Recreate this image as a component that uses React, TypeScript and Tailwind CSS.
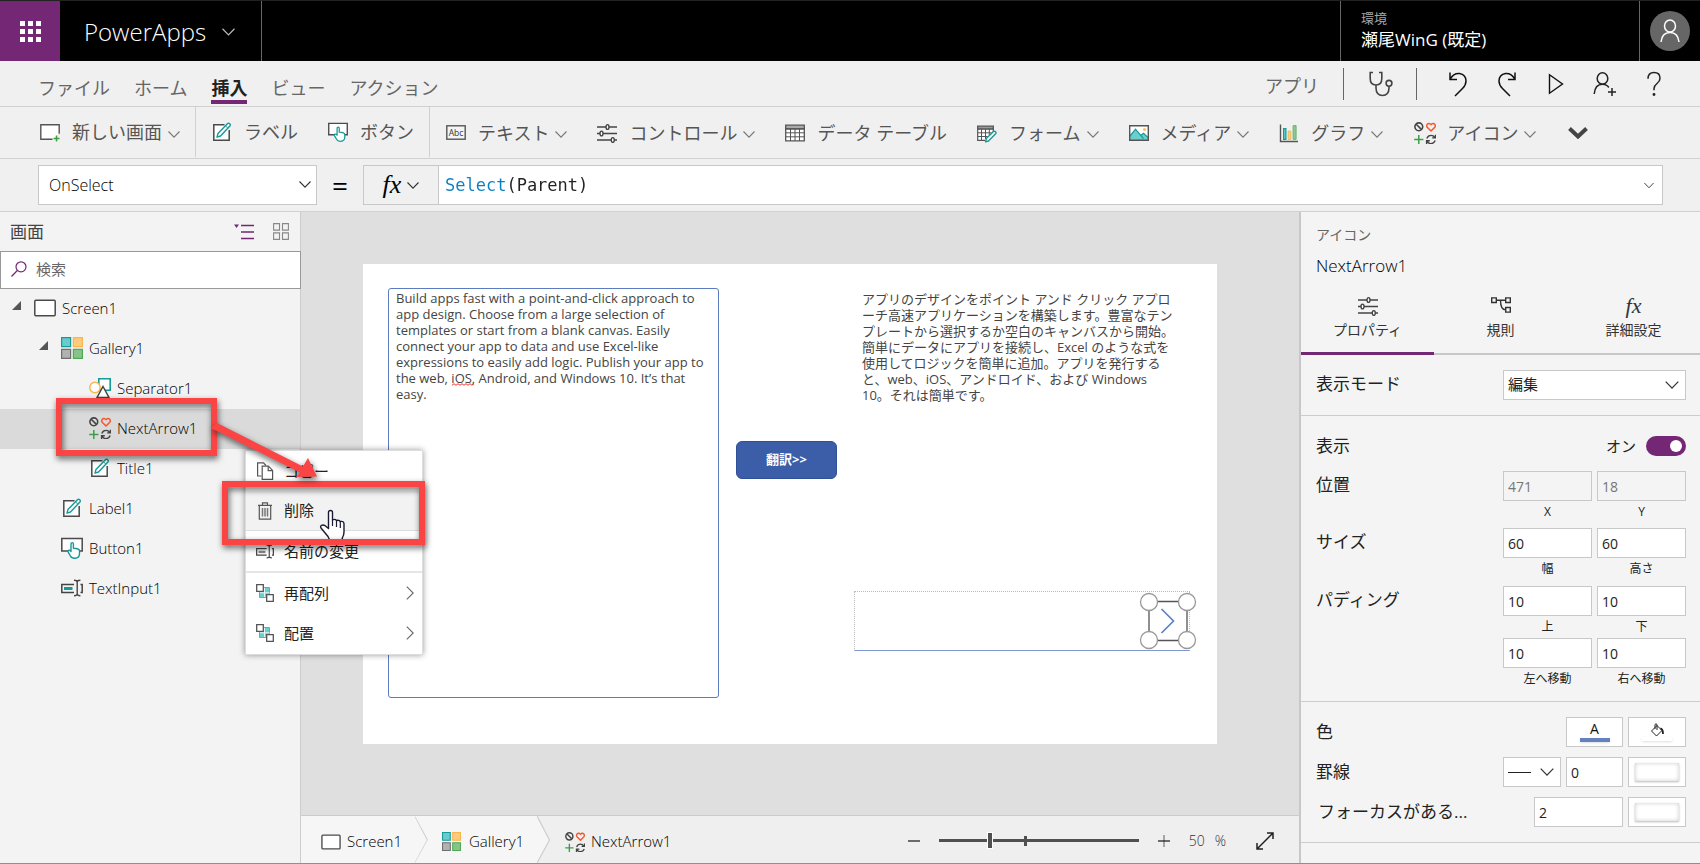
import React from "react";

type IconProps = { className?: string };

const Chevron = ({ className = "h-[7px] w-3 text-[#555]" }: IconProps) => (
  <svg className={className} viewBox="0 0 12 7" fill="none" stroke="currentColor" strokeWidth="1.1" aria-hidden="true">
    <path d="M.5 .5 6 6.2 11.5 .5" />
  </svg>
);

const ChevronRight = ({ className = "h-3.5 w-2 text-[#666]" }: IconProps) => (
  <svg className={className} viewBox="0 0 8 14" fill="none" stroke="currentColor" strokeWidth="1.1" aria-hidden="true">
    <path d="M.8 .6 7.2 7 .8 13.4" />
  </svg>
);

const NewScreenIcon = () => (
  <svg className="h-5 w-5 shrink-0" viewBox="0 0 20 20" fill="none" aria-hidden="true">
    <path d="M12.500 17.300H.8V2.700h18.400v9" fill="#fff" stroke="#555" strokeWidth="1.400" />
    <path d="M16.500 13.500v6M13.500 16.500h6" stroke="#3f9e45" strokeWidth="1.500" />
  </svg>
);

const ScreenIcon = ({ className = "h-[18px] w-[22px]" }: IconProps) => (
  <svg className={className} viewBox="0 0 22 18" aria-hidden="true">
    <rect x=".8" y="1.200" width="20.400" height="15.600" rx="1" fill="#fff" stroke="#4a4a4a" strokeWidth="1.500" />
  </svg>
);

const LabelIcon = ({ className = "h-5 w-5" }: IconProps) => (
  <svg className={`shrink-0 ${className}`} viewBox="0 0 20 20" fill="none" aria-hidden="true">
    <path d="M12.500 2.700H1.800v15.500h15.400V8" fill="#fff" stroke="#4a4a4a" strokeWidth="1.500" />
    <path d="M5 15.200l1-3.800L15.400 1.700q1.200-1 2.300 0t.2 2.300L8.500 14z" fill="#fff" stroke="#159a98" strokeWidth="1.400" strokeLinejoin="round" />
    <path d="M13.600 4 15.800 6" stroke="#159a98" />
  </svg>
);

const ButtonIcon = ({ className = "h-5 w-5" }: IconProps) => (
  <svg className={`shrink-0 ${className}`} viewBox="0 0 22 22" fill="none" aria-hidden="true">
    <path d="M7 14H.8V1.500h20.400V14H18" fill="#fff" stroke="#4a4a4a" strokeWidth="1.500" />
    <path
      d="M10 13.600V7q0-1.400 1.200-1.400T12.400 7v4.200q2.800.2 4.600.8 1.500.5 1.500 2v2.500q0 4.500-4.600 4.700-3.400.1-4.500-2.200L7.200 15.200q-.6-1.600.6-1.900 1-.2 2.200 1.200z"
      fill="#fff"
      stroke="#159a98"
      strokeWidth="1.400"
      strokeLinejoin="round"
    />
  </svg>
);

const TextIcon = () => (
  <svg className="h-5 w-5 shrink-0" viewBox="0 0 20 20" aria-hidden="true">
    <rect x=".8" y="2.800" width="18.400" height="13.400" fill="#f4f4f4" stroke="#555" strokeWidth="1.400" />
    <text x="10" y="12.600" textAnchor="middle" fontSize="8.500" fontFamily="Open Sans, sans-serif" fill="#333">
      Abc
    </text>
  </svg>
);

const SlidersIcon = ({ className = "h-5 w-5" }: IconProps) => (
  <svg className={`shrink-0 ${className}`} viewBox="0 0 20 20" fill="none" stroke="#444" strokeWidth="1.400" aria-hidden="true">
    <path d="M0 4h20M0 10.500h20M0 17h20" />
    <ellipse cx="10.500" cy="4" rx="1.500" ry="2.400" fill="#fff" />
    <ellipse cx="4.500" cy="10.500" rx="1.500" ry="2.400" fill="#fff" />
    <ellipse cx="15.800" cy="17" rx="1.500" ry="2.400" fill="#fff" />
  </svg>
);

const TableIcon = () => (
  <svg className="h-5 w-5 shrink-0" viewBox="0 0 20 20" fill="none" stroke="#555" aria-hidden="true">
    <path d="M.7 2.200h18.600v3.800H.7z" fill="#aaa" strokeWidth="1.300" />
    <path d="M.7 6h18.600v11.800H.7z" fill="#fff" strokeWidth="1.300" />
    <path d="M5.500 6v12M10 6v12M14.500 6v12M.7 9.800h18.600M.7 13.800h18.600" />
  </svg>
);

const FormIcon = () => (
  <svg className="h-5 w-5 shrink-0" viewBox="0 0 20 20" fill="none" stroke="#555" aria-hidden="true">
    <path d="M.7 3.200h15.600v3H.7z" fill="#999" strokeWidth="1.300" />
    <path d="M8 17.300H.7V6.200h15.600v3" fill="#fff" strokeWidth="1.200" />
    <path d="M4.500 6v11M8.500 6v10M12.300 6v6M.7 9.800h14M.7 13.500h10" />
    <path d="M8.500 18.800l.8-3.200 7.200-7q1-.8 2 .1t.1 2L11.500 18z" fill="#fff" stroke="#159a98" strokeWidth="1.400" strokeLinejoin="round" />
  </svg>
);

const MediaIcon = () => (
  <svg className="h-5 w-5 shrink-0" viewBox="0 0 20 20" fill="none" aria-hidden="true">
    <path d="M.7 2.700h18.600v14.600H.7z" fill="#fff" />
    <circle cx="15.500" cy="6.500" r="1.600" fill="#fbc26a" />
    <path d="M1 13.500 6.500 6.200l5.500 6 2.500-2L19 14.500v2.600H1z" fill="#6ccfce" />
    <path d="M1 13 6.500 6.200l8 9.500M12 12.200l2.500-2L19 14.500" stroke="#159a98" strokeWidth="1.200" />
    <path d="M.7 2.700h18.600v14.600H.7z" stroke="#555" strokeWidth="1.400" />
  </svg>
);

const ChartIcon = () => (
  <svg className="h-5 w-5 shrink-0" viewBox="0 0 20 20" fill="none" aria-hidden="true">
    <path d="M1.500 1.500v17H19" stroke="#555" strokeWidth="1.400" />
    <path d="M4.600 5.600h2.300v10.800H4.600z" fill="#6ccfce" stroke="#159a98" strokeWidth="1.200" />
    <path d="M9.200 8.100h2.600v8.300H9.200z" fill="#fbd08a" stroke="#f5b555" />
    <path d="M14.100 2.600h3v13.800h-3z" fill="#8bc78e" stroke="#6db771" />
  </svg>
);

const ShapesSetIcon = ({ className = "h-[22px] w-[22px]" }: IconProps) => (
  <svg className={`shrink-0 ${className}`} viewBox="0 0 22 22" fill="none" aria-hidden="true">
    <circle cx="4.800" cy="4.800" r="3.900" stroke="#444" strokeWidth="1.600" />
    <path d="M2.200 2.200 7.400 7.400" stroke="#444" strokeWidth="1.600" />
    <path d="M17 9 13.200 5.200q-1-1.400 0-2.900 1.800-1.900 3.800.3 2-2.200 3.800-.3 1 1.500 0 2.900z" stroke="#f1582d" strokeWidth="1.500" strokeLinejoin="round" />
    <path d="M4.800 13v9M.2 17.500h9.200" stroke="#3f9e45" strokeWidth="1.500" />
    <path d="M12.800 16.400q1.200-3 4.300-3 2.300 0 3.600 2M21.400 12.700v3.200h-3.200M21.200 18.600q-1.200 3-4.300 3-2.300 0-3.600-2M12.600 22v-3.200h3.200" stroke="#444" strokeWidth="1.400" />
  </svg>
);

const GalleryIcon = ({ className = "h-[22px] w-[22px]" }: IconProps) => (
  <svg className={className} viewBox="0 0 22 22" aria-hidden="true">
    <path d="M.6.600h9v9h-9z" fill="#67cccb" stroke="#159a98" strokeWidth="1.200" />
    <path d="M12.400.6h9v9h-9z" fill="#fdcb7b" stroke="#f9b64c" strokeWidth="1.200" />
    <path d="M.6 12.400h9v9h-9z" fill="#b1b1b1" stroke="#6e6e6e" strokeWidth="1.200" />
    <path d="M12.400 12.400h9v9h-9z" fill="#87c489" stroke="#4fa955" strokeWidth="1.200" />
  </svg>
);

const SeparatorIcon = () => (
  <svg className="h-[22px] w-[22px]" viewBox="0 0 22 22" aria-hidden="true">
    <path d="M9.800 1.800h11.400v11.400H9.800z" fill="#fff" stroke="#159a98" strokeWidth="1.600" />
    <circle cx="6" cy="10.500" r="5.200" fill="#fff" stroke="#f9b64c" strokeWidth="1.500" />
    <path d="M14 9.500 20 20.500H8z" fill="#fff" stroke="#444" strokeWidth="1.500" />
  </svg>
);

const TextInputIcon = ({ accent = "#159a98", className = "h-[18px] w-[22px]" }: IconProps & { accent?: string }) => (
  <svg className={className} viewBox="0 0 22 18" fill="none" aria-hidden="true">
    <path d="M13 13.500H.8v-8H13M19.500 5.500h1.700v8h-1.700" stroke="#444" strokeWidth="1.500" />
    <path d="M3 8h8.500v3H3z" fill={accent} />
    <path d="M13 1.200q3.200 0 3.200 1.700v12.200q0 1.700-3.200 1.700M19.400 1.200q-3.200 0-3.200 1.700v12.200q0 1.700 3.200 1.700" stroke="#444" strokeWidth="1.400" />
  </svg>
);

const FxIcon = ({ className }: IconProps) => (
  <span className={`font-['Liberation_Serif',serif] italic ${className}`} aria-hidden="true">
    fx
  </span>
);

const ArrangeIcon = () => (
  <svg className="h-[18px] w-[18px]" viewBox="0 0 18 18" fill="none" aria-hidden="true">
    <path d="M3.500 3.500h10v10h-10z" fill="#6ccfce" stroke="#4bb9b8" />
    <path d="M.7.700h6.600v6.600H.7zM10.700 10.700h6.600v6.600h-6.600z" fill="#fff" stroke="#555" strokeWidth="1.300" />
    <path d="M8.500 4v9M4 8.800h9.500" stroke="#fff" strokeWidth=".8" />
  </svg>
);

const CopyIcon = () => (
  <svg className="h-[18px] w-[18px]" viewBox="0 0 18 18" fill="#fff" stroke="#555" strokeWidth="1.200" aria-hidden="true">
    <path d="M5.500 14H1.600V.8h5.900L10 3.500" />
    <path d="M6.200 4.200h6.200l4.200 4.200v9H6.200z" />
    <path d="M12.200 4.400v4.200h4.200" fill="none" />
  </svg>
);

const TrashIcon = () => (
  <svg className="h-[18px] w-[18px]" viewBox="0 0 18 18" fill="none" stroke="#555" strokeWidth="1.200" aria-hidden="true">
    <path d="M2 3.300h14M6.500 3V.9h5V3M3.300 3.500v13.700h11.400V3.500" />
    <path d="M6.500 6v8.500M9 6v8.500M11.500 6v8.500" strokeWidth="1.500" stroke="#777" />
  </svg>
);

type RibbonItemProps = { icon: React.ReactNode; label: string; menu?: boolean };

const RibbonItem = ({ icon, label, menu }: RibbonItemProps) => (
  <button className="flex shrink-0 items-center whitespace-nowrap text-lg leading-6 text-[#555]">
    <span className="mr-3 flex w-5 justify-center">{icon}</span>
    {label}
    {menu && (
      <span className="ml-1.5 pt-1">
        <Chevron className="h-[7px] w-3 text-[#777]" />
      </span>
    )}
  </button>
);

const TopBar = () => (
  <header className="flex h-[61px] shrink-0 border-t border-[#222] bg-black text-white">
    <button aria-label="アプリ起動ツール" className="flex w-[60px] items-center justify-center bg-[#742774]">
      <span className="grid grid-cols-3 gap-[3px]">
        {Array.from({ length: 9 }, (_, i) => (
          <span key={i} className="h-[5px] w-[5px] bg-white" />
        ))}
      </span>
    </button>
    <button className="flex w-[202px] items-center gap-4 border-r border-[#666] pl-6 pt-0.5 text-2xl font-light">
      PowerApps
      <Chevron className="h-2 w-[13px] text-[#bbb]" />
    </button>
    <div className="flex-1" />
    <div className="flex w-[299px] flex-col justify-center border-l border-[#666] pb-[3px] pl-5">
      <span className="text-[13px] leading-5 text-[#a8a8a8]">環境</span>
      <span className="text-[17px] leading-6">瀬尾WinG (既定)</span>
    </div>
    <div className="flex w-[61px] items-center border-l border-[#666] pl-2.5">
      <button aria-label="アカウント" className="flex h-10 w-10 items-center justify-center rounded-full bg-[#666]">
        <svg className="h-6 w-5" viewBox="0 0 20 24" fill="none" stroke="#fff" strokeWidth="1.500" aria-hidden="true">
          <ellipse cx="10" cy="7" rx="5.500" ry="6" />
          <path d="M1 23q1-9.500 9-9.500T19 23" />
        </svg>
      </button>
    </div>
  </header>
);

const toolButton = "flex w-[49px] items-center justify-center";

const MenuTabs = () => (
  <nav className="flex h-[46px] shrink-0 items-center border-b border-[#d0d0d0] bg-[#f0f0f0] pl-[38px] text-lg leading-6">
    <div className="flex gap-6 whitespace-nowrap pt-2 text-[#666]">
      <a href="#file">ファイル</a>
      <a href="#home">ホーム</a>
      <a href="#insert" className="-mb-1 border-b-4 border-[#742774] font-bold text-[#222]">
        挿入
      </a>
      <a href="#view">ビュー</a>
      <a href="#action">アクション</a>
    </div>
    <div className="ml-auto flex items-center pr-[22px] text-[#222]">
      <button className="pt-1 text-[#666]">アプリ</button>
      <span className="ml-6 h-8 w-px bg-[#666]" />
      <button aria-label="アプリ チェッカー" className="ml-[25px]">
        <svg className="h-[26px] w-6" viewBox="0 0 24 26" fill="none" stroke="#444" strokeWidth="1.600" aria-hidden="true">
          <path d="M4 1.500H1.200v6Q1.200 14 7 14t5.800-6.500v-6H10M7 14v3q.2 7.500 6.500 7.500T20 17v-1.500" />
          <circle cx="20" cy="12.300" r="2.900" />
        </svg>
      </button>
      <span className="ml-[23px] h-8 w-px bg-[#666]" />
      <div className="ml-4 flex items-center">
        <button aria-label="元に戻す" className={toolButton}>
          <svg className="h-[26px] w-[18px]" viewBox="0 0 18 26" fill="none" stroke="#111" strokeWidth="1.500" aria-hidden="true">
            <path d="M1 1.500v7h7M1.300 8Q4.500 2 10.500 2.500 17 3.800 17 10q0 4-3.500 7.500L6 25" />
          </svg>
        </button>
        <button aria-label="やり直し" className={toolButton}>
          <svg className="h-[26px] w-[18px]" viewBox="0 0 18 26" fill="none" stroke="#111" strokeWidth="1.500" aria-hidden="true">
            <path d="M17 1.500v7h-7M16.700 8Q13.500 2 7.500 2.500 1 3.800 1 10q0 4 3.500 7.500L12 25" />
          </svg>
        </button>
        <button aria-label="プレビュー" className={toolButton}>
          <svg className="h-[22px] w-4" viewBox="0 0 16 22" fill="none" stroke="#111" strokeWidth="1.400" aria-hidden="true">
            <path d="M1.500 1.800 14.500 11 1.500 20.200z" />
          </svg>
        </button>
        <button aria-label="共有" className={toolButton}>
          <svg className="h-[26px] w-6" viewBox="0 0 24 26" fill="none" stroke="#222" strokeWidth="1.500" aria-hidden="true">
            <ellipse cx="9.500" cy="7.500" rx="5.300" ry="5.800" />
            <path d="M1.200 23q.8-9.700 8.300-9.700 4.200 0 6.300 3.200M19 17v8M15 21h8" />
          </svg>
        </button>
        <button aria-label="ヘルプ" className={toolButton}>
          <svg className="h-[26px] w-4" viewBox="0 0 16 26" fill="none" stroke="#222" strokeWidth="1.500" aria-hidden="true">
            <path d="M2 7.800Q2 1.500 8 1.500t6 5.700q0 3-3 5.300t-3 5.300v1.500" />
            <circle cx="8" cy="23.500" r=".7" fill="#222" />
          </svg>
        </button>
      </div>
    </div>
  </nav>
);

const Ribbon = () => (
  <div className="flex h-[52px] shrink-0 border-b border-[#d0d0d0] bg-[#f0f0f0]">
    <div className="mb-px flex items-center border-r border-[#d0d0d0] pl-10 pr-[15px]">
      <RibbonItem icon={<NewScreenIcon />} label="新しい画面" menu />
    </div>
    <div className="mb-px flex items-center gap-[30px] border-r border-[#d0d0d0] pl-4 pr-[15px]">
      <RibbonItem icon={<LabelIcon />} label="ラベル" />
      <RibbonItem icon={<ButtonIcon />} label="ボタン" />
    </div>
    <div className="flex items-center gap-[30px] pl-4">
      <RibbonItem icon={<TextIcon />} label="テキスト" menu />
      <RibbonItem icon={<SlidersIcon />} label="コントロール" menu />
      <RibbonItem icon={<TableIcon />} label="データ テーブル" />
      <RibbonItem icon={<FormIcon />} label="フォーム" menu />
      <RibbonItem icon={<MediaIcon />} label="メディア" menu />
      <div className="flex items-center gap-8">
        <RibbonItem icon={<ChartIcon />} label="グラフ" menu />
        <RibbonItem icon={<ShapesSetIcon />} label="アイコン" menu />
        <button aria-label="その他">
          <svg className="h-3 w-5" viewBox="0 0 20 12" fill="none" stroke="#444" strokeWidth="4" aria-hidden="true">
            <path d="M1.500 1.500 10 9.500l8.500-8" />
          </svg>
        </button>
      </div>
    </div>
  </div>
);

const FormulaBar = () => (
  <div className="flex h-[53px] shrink-0 items-center border-b border-[#d0d0d0] bg-[#f0f0f0] pl-[38px] pr-[37px]">
    <div className="relative h-10 w-[279px]">
      <select aria-label="プロパティ" className="h-full w-full appearance-none border border-[#c8c8c8] bg-white pl-2.5 text-base font-light text-black">
        <option>OnSelect</option>
      </select>
      <Chevron className="pointer-events-none absolute right-1.5 top-4 h-[7px] w-3 text-[#333]" />
    </div>
    <span className="w-[46px] text-center text-[28px] font-medium leading-none text-black">=</span>
    <button aria-label="関数" className="flex h-10 w-[76px] items-center justify-center gap-1.5 border border-[#c8c8c8] bg-[#f0f0f0]">
      <FxIcon className="text-[26px] leading-8 text-black" />
      <Chevron className="h-[7px] w-3 text-[#333]" />
    </button>
    <div className="-ml-px flex h-10 flex-1 items-center border border-[#c8c8c8] bg-white pl-1.5 pr-2">
      <input
        aria-label="数式"
        defaultValue="Select(Parent)"
        spellCheck={false}
        className="h-full flex-1 bg-[linear-gradient(to_right,#0a7fc2_61px,#222_61px)] bg-clip-text font-['DejaVu_Sans_Mono',monospace] text-[17px] text-transparent outline-none"
      />
      <Chevron className="h-[7px] w-2.5 text-[#333]" />
    </div>
  </div>
);

type TreeRow = { name: string; depth: number; icon: React.ReactNode; open?: boolean; selected?: boolean };

const rows: TreeRow[] = [
  { name: "Screen1", depth: 0, icon: <ScreenIcon />, open: true },
  { name: "Gallery1", depth: 1, icon: <GalleryIcon />, open: true },
  { name: "Separator1", depth: 2, icon: <SeparatorIcon /> },
  { name: "NextArrow1", depth: 2, icon: <ShapesSetIcon />, selected: true },
  { name: "Title1", depth: 2, icon: <LabelIcon /> },
  { name: "Label1", depth: 1, icon: <LabelIcon /> },
  { name: "Button1", depth: 1, icon: <ButtonIcon className="h-[22px] w-[22px]" /> },
  { name: "TextInput1", depth: 1, icon: <TextInputIcon /> },
];

const indents = ["pl-3", "pl-[39px]", "pl-[67px]"];

const TreePanel = () => (
  <aside className="flex w-[301px] shrink-0 flex-col border-r border-[#ccc] bg-[#f3f3f3]">
    <div className="flex h-[39px] items-center pl-2.5 pr-[11px]">
      <h2 className="text-[17px] leading-6 text-[#444]">画面</h2>
      <button aria-label="ツリー表示" className="ml-auto">
        <svg className="h-4 w-5" viewBox="0 0 20 16" fill="none" aria-hidden="true">
          <path d="M7 1.500h13M7 8h13M7 14.500h13" stroke="#742774" strokeWidth="1.500" />
          <path d="M0 .5h5L2.500 4z" fill="#742774" />
        </svg>
      </button>
      <button aria-label="サムネイル表示" className="ml-[19px]">
        <svg className="h-[17px] w-4" viewBox="0 0 16 17" fill="none" stroke="#888" strokeWidth="1.100" aria-hidden="true">
          <path d="M.6.600h5.900v6.500H.6zM9.500.6h5.900v6.500H9.500zM.6 9.900h5.900v6.500H.6zM9.500 9.900h5.900v6.500H9.500z" />
        </svg>
      </button>
    </div>
    <label className="-mr-px flex h-[38px] items-center gap-[9px] border border-[#999] bg-white pb-0.5 pl-2.5">
      <svg className="h-4 w-4 shrink-0" viewBox="0 0 16 16" fill="none" stroke="#742774" strokeWidth="1.200" aria-hidden="true">
        <circle cx="10" cy="5.800" r="5" />
        <path d="M6.300 9.500.5 15.500" />
      </svg>
      <input aria-label="検索" placeholder="検索" className="w-full bg-transparent text-[15px] leading-5 text-[#333] outline-none placeholder:text-[#666]" />
    </label>
    <ul>
      {rows.map((row) => (
        <li key={row.name}>
          <button
            className={`flex h-10 w-full items-center pb-0.5 text-left text-[15px] font-light text-black ${indents[row.depth]} ${row.selected ? "bg-[#dadada]" : ""}`}
          >
            <span className="flex w-[22px] pb-1.5">
              {row.open && (
                <svg className="h-[9px] w-[9px]" viewBox="0 0 9 9" aria-hidden="true">
                  <path d="M9 0v9H0z" fill="#555" />
                </svg>
              )}
            </span>
            <span className="mr-1.5 flex w-[22px] justify-center">{row.icon}</span>
            {row.name}
          </button>
        </li>
      ))}
    </ul>
  </aside>
);

const sourceText = [
  "Build apps fast with a point-and-click approach to",
  "app design. Choose from a large selection of",
  "templates or start from a blank canvas. Easily",
  "connect your app to data and use Excel-like",
  "expressions to easily add logic. Publish your app to",
  "the web, iOS, Android, and Windows 10. It’s that",
  "easy.",
].join("\n");

const translatedText = [
  "アプリのデザインをポイント アンド クリック アプロ",
  "ーチ高速アプリケーションを構築します。豊富なテン",
  "プレートから選択するか空白のキャンバスから開始。",
  "簡単にデータにアプリを接続し、Excel のような式を",
  "使用してロジックを簡単に追加。アプリを発行する",
  "と、web、iOS、アンドロイド、および Windows",
  "10。それは簡単です。",
];

const Squiggle = () => (
  <svg className="pointer-events-none absolute left-[89px] top-[119px] h-[3px] w-[22px]" viewBox="0 0 22 3" fill="none" aria-hidden="true">
    <path d="M0 2.300 2 .7l2 1.600L6 .7l2 1.600L10 .7l2 1.600L14 .7l2 1.600L18 .7l2 1.600L22 .7" stroke="#f03030" />
  </svg>
);

const Selection = () => (
  <svg className="absolute left-[776px] top-[328px] h-[58px] w-[58px]" viewBox="0 0 58 58" fill="none" aria-hidden="true">
    <path d="M10 9.500h38v39H10z" stroke="#555" strokeWidth="1.300" />
    <path d="M22.500 17 34.500 29 22.500 41" stroke="#5f80c8" strokeWidth="1.700" />
    {[10, 48].map((cx) => [10, 48].map((cy) => <circle key={`${cx}-${cy}`} cx={cx} cy={cy} r="8.500" fill="#fff" stroke="#999" strokeWidth="1.300" />))}
  </svg>
);

const Artboard = () => (
  <main className="flex flex-1 items-center justify-center bg-[#dfdfdf] pb-5 pr-5">
    <div className="relative h-[480px] w-[854px] bg-white font-['Open_Sans','Noto_Sans_CJK_JP',sans-serif]">
      <textarea
        aria-label="TextInput1"
        spellCheck={false}
        defaultValue={sourceText}
        className="absolute left-[25px] top-6 h-[410px] w-[331px] resize-none overflow-hidden whitespace-pre rounded-[3px] border border-[#5b7cc0] bg-white px-[7px] py-px text-[13px] leading-4 text-[#444] outline-none"
      />
      <Squiggle />
      <button className="absolute left-[373px] top-[177px] h-[38px] w-[101px] rounded-md border border-[#2f4f96] bg-[#3c5ea8] text-[13px] font-bold text-white">翻訳&gt;&gt;</button>
      <p className="absolute left-[499px] top-[27px] whitespace-nowrap text-[13px] leading-4 text-[#444]">
        {translatedText.map((line) => (
          <span key={line} className="block">
            {line}
          </span>
        ))}
      </p>
      <div className="absolute left-[491px] top-[327px] h-[60px] w-[336px] border border-dotted border-[#bbb] border-b-[#7f99cf] [border-bottom-style:solid]" />
      <Selection />
    </div>
  </main>
);

const CrumbDivider = () => (
  <svg className="h-full w-[13px]" viewBox="0 0 13 47" preserveAspectRatio="none" aria-hidden="true">
    <path d="M0 0 12.500 24 0 47z" fill="#f6f6f6" />
    <path d="M0 0 12.500 24 0 47" fill="none" stroke="#d0d0d0" strokeWidth="1.300" />
  </svg>
);

const StatusBar = () => (
  <footer className="flex h-12 shrink-0 items-stretch border-t border-[#ccc] bg-[#efefef] text-[15px] font-light text-black">
    <a href="#screen1" className="flex w-[114px] items-center gap-1.5 bg-[#f6f6f6] pl-5 pt-1">
      <ScreenIcon className="h-4 w-5" />
      Screen1
    </a>
    <CrumbDivider />
    <a href="#gallery1" className="-ml-[13px] flex w-[122px] items-center gap-2 bg-[#f6f6f6] pl-[27px] pt-1 [clip-path:polygon(0_0,100%_0,100%_100%,0_100%,13px_50%)]">
      <GalleryIcon className="h-[19px] w-[19px]" />
      Gallery1
    </a>
    <CrumbDivider />
    <a href="#nextarrow1" className="flex items-center gap-1.5 pl-[15px] pt-1">
      <ShapesSetIcon className="h-5 w-5" />
      NextArrow1
    </a>
    <div className="ml-auto flex items-center pr-[25px] pt-0.5">
      <button aria-label="縮小">
        <svg className="h-3 w-3" viewBox="0 0 12 12" stroke="#111" strokeWidth="1.200" aria-hidden="true">
          <path d="M0 6h12" />
        </svg>
      </button>
      <div className="relative ml-[19px] flex h-[18px] w-[200px] items-center">
        <span className="absolute left-[85px] top-1 h-2.5 w-[3px] bg-[#505050]" />
        <input
          type="range"
          aria-label="ズーム"
          min={0}
          max={100}
          defaultValue={25}
          className="relative h-[18px] w-full appearance-none bg-transparent [&::-webkit-slider-runnable-track]:h-[3px] [&::-webkit-slider-runnable-track]:bg-[#505050] [&::-webkit-slider-thumb]:-mt-[7px] [&::-webkit-slider-thumb]:h-[17px] [&::-webkit-slider-thumb]:w-1.5 [&::-webkit-slider-thumb]:appearance-none [&::-webkit-slider-thumb]:border [&::-webkit-slider-thumb]:border-white [&::-webkit-slider-thumb]:bg-[#505050]"
        />
      </div>
      <button aria-label="拡大" className="ml-[19px]">
        <svg className="h-3 w-3" viewBox="0 0 12 12" aria-hidden="true">
          <path d="M6 0v12" stroke="#888" strokeWidth="1.400" />
          <path d="M0 6h12" stroke="#111" strokeWidth="1.200" />
        </svg>
      </button>
      <span className="ml-[19px] text-sm text-[#333]">50</span>
      <span className="ml-2.5 text-sm text-[#333]">%</span>
      <button aria-label="ウィンドウに合わせる" className="ml-[30px]">
        <svg className="h-[18px] w-[18px]" viewBox="0 0 18 18" fill="none" stroke="#222" strokeWidth="1.500" aria-hidden="true">
          <path d="M1 17 17 1M11 1h6v6M7 17H1v-6" />
        </svg>
      </button>
    </div>
  </footer>
);

const fieldClass = "h-[30px] border border-[#c8c8c8] bg-white pl-1 text-sm text-[#222] disabled:bg-transparent disabled:text-[#777]";

type NumberFieldProps = { label: string; value: string; disabled?: boolean };

const NumberField = ({ label, value, disabled }: NumberFieldProps) => (
  <label className="flex w-[89px] flex-col items-center text-xs leading-[22px] text-[#222]">
    <input className={`w-full ${fieldClass}`} defaultValue={value} disabled={disabled} />
    {label}
  </label>
);

const Swatch = ({ label }: { label: string }) => (
  <button aria-label={label} className="flex h-[30px] w-[58px] items-center justify-center border border-[#c8c8c8] bg-white">
    <span className="h-[18px] w-11 bg-white shadow-[0_1px_2px_#bbb,inset_0_0_4px_#ccc]" />
  </button>
);

const SectionLabel = ({ children }: { children: React.ReactNode }) => <span className="text-[17px] leading-7 text-[#222]">{children}</span>;

const RulesIcon = () => (
  <svg className="h-4 w-5" viewBox="0 0 20 16" fill="none" stroke="#333" strokeWidth="1.400" aria-hidden="true">
    <path d="M.7.900h4.600v4.600H.7zM14.700.9h4.600v4.600h-4.600zM14.700 10.500h4.600v4.600h-4.600zM5.300 3.200h9.400M9.500 3.200q0 9.600 5.200 9.600" />
  </svg>
);

const tabClass = "flex flex-1 flex-col items-center pt-4";

const PropertiesPanel = () => (
  <aside className="flex w-[401px] shrink-0 flex-col border-l-2 border-[#c8c8c8] bg-[#f4f4f4]">
    <div className="pl-[15px] pt-3">
      <p className="text-sm leading-[22px] text-[#666]">アイコン</p>
      <p className="mt-1.5 text-[17px] font-light leading-7 text-black">NextArrow1</p>
    </div>
    <div role="tablist" className="flex h-[75px] border-b-2 border-[#c8c8c8] text-sm leading-5 text-[#333]">
      <button role="tab" aria-selected="true" className={`-mb-0.5 border-b-[3px] border-[#742774] ${tabClass}`}>
        <span className="flex h-6 items-start">
          <SlidersIcon />
        </span>
        プロパティ
      </button>
      <button role="tab" aria-selected="false" className={tabClass}>
        <span className="flex h-6 items-start pt-px">
          <RulesIcon />
        </span>
        規則
      </button>
      <button role="tab" aria-selected="false" className={tabClass}>
        <span className="flex h-6 items-center pb-1">
          <FxIcon className="text-[22px] leading-6" />
        </span>
        詳細設定
      </button>
    </div>
    <div className="flex h-[61px] items-center justify-between border-b border-[#ccc] pl-[15px] pr-3.5">
      <span className="pb-0.5">
        <SectionLabel>表示モード</SectionLabel>
      </span>
      <div className="relative h-[30px] w-[183px]">
        <select aria-label="表示モード" className="h-full w-full appearance-none border border-[#c8c8c8] bg-white pb-0.5 pl-1 text-[15px] text-[#222]">
          <option>編集</option>
        </select>
        <Chevron className="pointer-events-none absolute right-[7px] top-[11px] h-2 w-3.5 text-[#333]" />
      </div>
    </div>
    <div className="flex flex-col border-b border-[#ccc] pb-[11px] pl-[15px] pr-3.5 pt-[15px]">
      <label className="flex h-[30px] items-center">
        <SectionLabel>表示</SectionLabel>
        <span className="ml-auto mr-2.5 text-[15px] text-[#222]">オン</span>
        <input
          type="checkbox"
          defaultChecked
          className="flex h-5 w-10 appearance-none items-center justify-end rounded-full bg-[#742774] px-1 before:block before:h-3 before:w-3 before:rounded-full before:bg-white"
        />
      </label>
      <div className="mt-2.5 flex gap-[5px]">
        <span className="mr-auto">
          <SectionLabel>位置</SectionLabel>
        </span>
        <NumberField label="X" value="471" disabled />
        <NumberField label="Y" value="18" disabled />
      </div>
      <div className="mt-[5px] flex gap-[5px]">
        <span className="mr-auto">
          <SectionLabel>サイズ</SectionLabel>
        </span>
        <NumberField label="幅" value="60" />
        <NumberField label="高さ" value="60" />
      </div>
      <div className="mt-1.5 flex">
        <span className="mr-auto">
          <SectionLabel>パディング</SectionLabel>
        </span>
        <div className="grid grid-cols-2 gap-x-[5px]">
          <NumberField label="上" value="10" />
          <NumberField label="下" value="10" />
          <NumberField label="左へ移動" value="10" />
          <NumberField label="右へ移動" value="10" />
        </div>
      </div>
    </div>
    <div className="flex flex-col gap-2.5 border-b border-[#ccc] py-[15px] pl-[15px] pr-3.5">
      <div className="flex items-center gap-[5px]">
        <span className="mr-auto">
          <SectionLabel>色</SectionLabel>
        </span>
        <button className="flex h-[30px] w-[57px] flex-col items-center border border-[#c8c8c8] bg-white pt-0.5 text-sm leading-[18px] text-[#111]">
          A
          <span className="h-1 w-[30px] bg-[#6480bf] shadow-sm" />
        </button>
        <button aria-label="塗りつぶし" className="flex h-[30px] w-[58px] flex-col items-center border border-[#c8c8c8] bg-white pt-[5px]">
          <svg className="h-3.5 w-3.5" viewBox="0 0 14 14" fill="none" stroke="#222" aria-hidden="true">
            <path d="M1.500 8 7 2.500l5 5L6.500 13zM5 6V1.500Q6 0 7 1.500V7" />
            <path d="M10.500 5.500q2.500.5 2.500 5.500" strokeWidth="1.800" />
          </svg>
          <span className="h-1 w-[30px] bg-white shadow" />
        </button>
      </div>
      <div className="flex items-center gap-[5px]">
        <span className="mr-auto">
          <SectionLabel>罫線</SectionLabel>
        </span>
        <button aria-label="罫線のスタイル" className="flex h-[30px] w-[58px] items-center justify-between border border-[#c8c8c8] bg-white pl-1 pr-1.5">
          <span className="h-px w-[23px] bg-[#222]" />
          <Chevron className="h-2 w-3.5 text-[#333]" />
        </button>
        <input aria-label="罫線の太さ" defaultValue="0" className={`w-[57px] ${fieldClass}`} />
        <Swatch label="罫線の色" />
      </div>
      <div className="flex items-center gap-[5px]">
        <span className="mr-auto pl-0.5">
          <SectionLabel>フォーカスがある...</SectionLabel>
        </span>
        <input aria-label="フォーカスの罫線" defaultValue="2" className={`w-[89px] ${fieldClass}`} />
        <Swatch label="フォーカスの罫線の色" />
      </div>
    </div>
  </aside>
);

const menuButton = "flex h-10 w-full items-center gap-2.5 pl-2.5 pr-2 text-left text-[15px] text-[#222]";

const ContextMenu = () => (
  <div role="menu" className="absolute left-[245px] top-[450px] w-[178px] border border-[#ddd] bg-white pb-px shadow-[0_0_6px_rgba(0,0,0,0.4)]">
    <button role="menuitem" className={menuButton}>
      <CopyIcon />
      コピー
    </button>
    <button role="menuitem" className={`${menuButton} border-b border-[#ddd] bg-[#f2f2f2]`}>
      <TrashIcon />
      削除
    </button>
    <button role="menuitem" className={menuButton}>
      <TextInputIcon accent="#888" className="h-[15px] w-[18px]" />
      名前の変更
    </button>
    <div className="h-0.5 bg-[#e5e5e5]" />
    <button role="menuitem" className={menuButton}>
      <ArrangeIcon />
      再配列
      <span className="ml-auto">
        <ChevronRight />
      </span>
    </button>
    <button role="menuitem" className={menuButton}>
      <ArrangeIcon />
      配置
      <span className="ml-auto">
        <ChevronRight />
      </span>
    </button>
  </div>
);

const Callouts = () => (
  <div className="pointer-events-none absolute left-0 top-0" aria-hidden="true">
    <svg className="absolute left-[319px] top-[509px] h-9 w-7" viewBox="0 0 28 36" aria-hidden="true">
      <path
        d="M9.500 19.500V3.500q0-2 2-2t2 2V11q2.500-1.500 4 .5 2.500-1 3.800 1 3.700-.8 3.700 2.500v8q0 3-1.500 5.500L22 35h-9.500L9 27.500 2 19q-1-2 .5-2.700 2-.8 4 .7z"
        fill="#fff"
        stroke="#1a1a33"
        strokeWidth="1.400"
        strokeLinejoin="round"
      />
      <path d="M13.500 11v6M17.500 12v6M21.300 13v6" stroke="#1a1a33" strokeWidth="1.200" />
    </svg>
    <div className="absolute left-14 top-[398px] h-[58px] w-[161px] border-[6px] border-[#fb4444] drop-shadow-[1px_3px_3px_rgba(0,0,0,0.6)]" />
    <div className="absolute left-[222px] top-[481px] h-16 w-[203px] border-[6px] border-[#fb4444] drop-shadow-[1px_3px_3px_rgba(0,0,0,0.6)]" />
    <svg className="absolute left-[205px] top-[415px] h-[70px] w-[120px] drop-shadow-[1px_3px_3px_rgba(0,0,0,0.6)]" viewBox="0 0 120 70" aria-hidden="true">
      <path d="M6 13 12 8 98 51.500 103 43 112 61.500 91 62 95 57.500 7 13.500z" fill="#fb4444" />
    </svg>
  </div>
);

export default function App() {
  return (
    <div className="relative flex h-screen flex-col overflow-hidden border-b border-[#5b9bdd] bg-[#f0f0f0] font-['Open_Sans','Noto_Sans_CJK_JP',sans-serif]">
      <TopBar />
      <MenuTabs />
      <Ribbon />
      <FormulaBar />
      <div className="flex min-h-0 flex-1">
        <TreePanel />
        <div className="flex min-w-0 flex-1 flex-col">
          <Artboard />
          <StatusBar />
        </div>
        <PropertiesPanel />
      </div>
      <ContextMenu />
      <Callouts />
    </div>
  );
}
